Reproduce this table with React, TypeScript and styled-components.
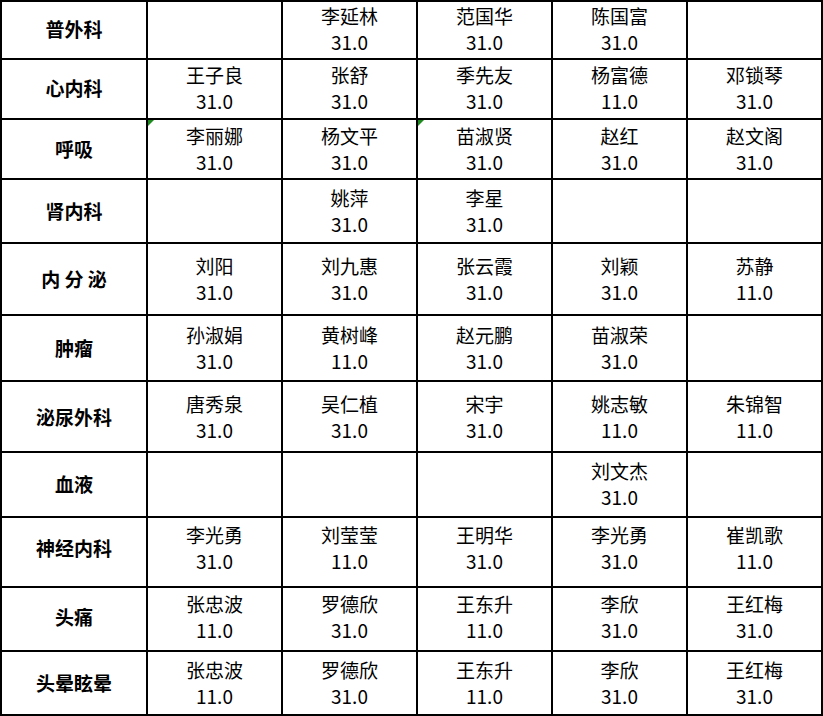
import React from "react";
import styled, { createGlobalStyle } from "styled-components";

const GlobalStyle = createGlobalStyle`
  html, body {
    margin: 0;
    padding: 0;
    background: #ffffff;
  }
  body {
    font-family: "Noto Sans CJK SC", "Noto Sans", sans-serif;
    color: #000000;
  }
`;

type Doc = { name: string; score: string } | null;

type Dept = {
  title: string;
  height: number;
  lift?: number;
  docs: Doc[];
  flags?: number[];
};

const d = (name: string, score: string): Doc => ({ name, score });

const depts: Dept[] = [
  {
    title: "普外科",
    height: 56,
    lift: 2,
    docs: [null, d("李延林", "31.0"), d("范国华", "31.0"), d("陈国富", "31.0"), null],
  },
  {
    title: "心内科",
    height: 58,
    lift: 2,
    docs: [d("王子良", "31.0"), d("张舒", "31.0"), d("季先友", "31.0"), d("杨富德", "11.0"), d("邓锁琴", "31.0")],
  },
  {
    title: "呼吸",
    height: 58,
    docs: [d("李丽娜", "31.0"), d("杨文平", "31.0"), d("苗淑贤", "31.0"), d("赵红", "31.0"), d("赵文阁", "31.0")],
    flags: [0, 2],
  },
  {
    title: "肾内科",
    height: 62,
    docs: [null, d("姚萍", "31.0"), d("李星", "31.0"), null, null],
  },
  {
    title: "内 分 泌",
    height: 70,
    docs: [d("刘阳", "31.0"), d("刘九惠", "31.0"), d("张云霞", "31.0"), d("刘颖", "31.0"), d("苏静", "11.0")],
  },
  {
    title: "肿瘤",
    height: 64,
    docs: [d("孙淑娟", "31.0"), d("黄树峰", "11.0"), d("赵元鹏", "31.0"), d("苗淑荣", "31.0"), null],
  },
  {
    title: "泌尿外科",
    height: 69,
    docs: [d("唐秀泉", "31.0"), d("吴仁植", "31.0"), d("宋宇", "31.0"), d("姚志敏", "11.0"), d("朱锦智", "11.0")],
  },
  {
    title: "血液",
    height: 63,
    lift: 1,
    docs: [null, null, null, d("刘文杰", "31.0"), null],
  },
  {
    title: "神经内科",
    height: 68,
    lift: 8,
    docs: [d("李光勇", "31.0"), d("刘莹莹", "11.0"), d("王明华", "31.0"), d("李光勇", "31.0"), d("崔凯歌", "11.0")],
  },
  {
    title: "头痛",
    height: 62,
    lift: 5,
    docs: [d("张忠波", "11.0"), d("罗德欣", "31.0"), d("王东升", "11.0"), d("李欣", "31.0"), d("王红梅", "31.0")],
  },
  {
    title: "头晕眩晕",
    height: 62,
    lift: 1,
    docs: [d("张忠波", "11.0"), d("罗德欣", "31.0"), d("王东升", "11.0"), d("李欣", "31.0"), d("王红梅", "31.0")],
  },
];

const Sheet = styled.div<{ $rows: string }>`
  display: grid;
  grid-template-columns: 144px repeat(5, 133px);
  grid-template-rows: ${(p) => p.$rows};
  gap: 2px;
  padding: 2px;
  width: 823px;
  height: 716px;
  box-sizing: border-box;
  background: #000000;
`;

const Cell = styled.div<{ $flag?: boolean; $lift?: number }>`
  position: relative;
  box-sizing: border-box;
  background: #ffffff;
  display: flex;
  flex-direction: column;
  align-items: center;
  justify-content: center;
  padding-bottom: ${(p) => p.$lift ?? 0}px;
  font-size: 19px;
  line-height: 26px;
  white-space: pre;

  &::before {
    content: "";
    display: ${(p) => (p.$flag ? "block" : "none")};
    position: absolute;
    left: 0;
    top: 0;
    width: 0;
    height: 0;
    border-top: 6px solid #1f8a1f;
    border-right: 6px solid transparent;
  }
`;

const HeadCell = styled(Cell)`
  font-weight: 700;
`;

const Name = styled.span`
  display: block;
`;

const Score = styled.span`
  display: block;
`;

export default function App() {
  const rows = depts.map((r) => `${r.height}px`).join(" ");
  return (
    <>
      <GlobalStyle />
      <Sheet $rows={rows}>
        {depts.map((row) => (
          <React.Fragment key={row.title}>
            <HeadCell $lift={row.lift}>{row.title}</HeadCell>
            {row.docs.map((doc, i) => (
              <Cell key={i} $lift={row.lift} $flag={row.flags?.includes(i)}>
                {doc && (
                  <>
                    <Name>{doc.name}</Name>
                    <Score>{doc.score}</Score>
                  </>
                )}
              </Cell>
            ))}
          </React.Fragment>
        ))}
      </Sheet>
    </>
  );
}
